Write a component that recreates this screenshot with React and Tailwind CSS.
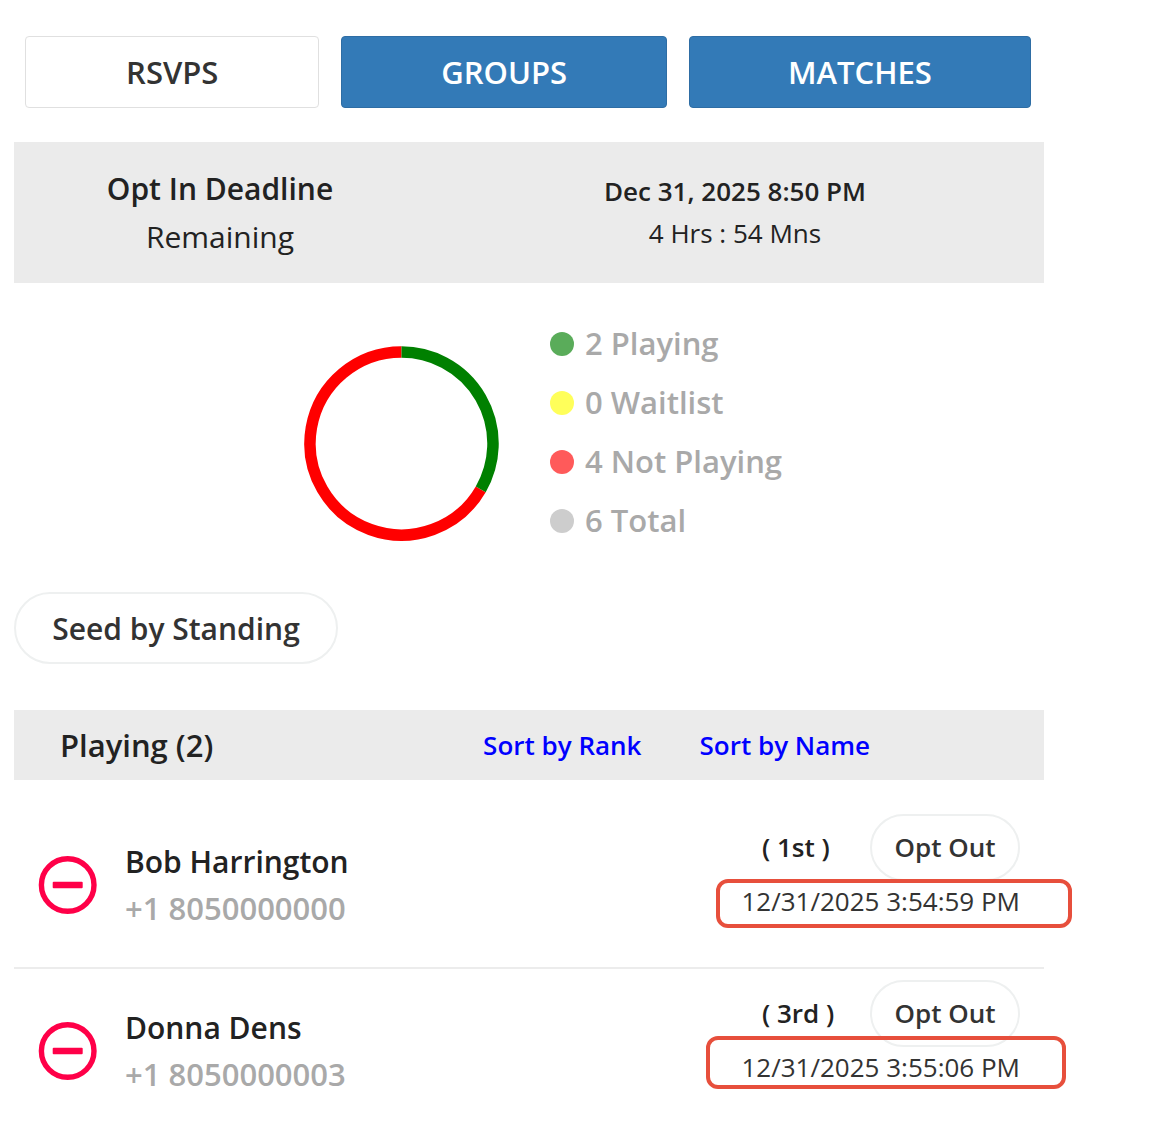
import React from "react";

const tabs = [
  {
    label: "RSVPS",
    className: "flex-[294_1_0%] bg-white border-[#e0e0e0] text-[#333333]",
  },
  {
    label: "GROUPS",
    className: "flex-[325_1_0%] bg-[#337ab7] border-[#2e6da4] text-white",
  },
  {
    label: "MATCHES",
    className: "flex-[342_1_0%] bg-[#337ab7] border-[#2e6da4] text-white",
  },
];

const legend = [
  { text: "2 Playing", dot: "bg-[#5aac5a]" },
  { text: "0 Waitlist", dot: "bg-[#ffff5a]" },
  { text: "4 Not Playing", dot: "bg-[#ff5a5a]" },
  { text: "6 Total", dot: "bg-[#cdcdcd]" },
];

const players = [
  {
    name: "Bob Harrington",
    phone: "+1 8050000000",
    rank: "( 1st )",
    time: "12/31/2025 3:54:59 PM",
    highlight: "-left-6 -right-[52px] -top-0.5 -bottom-[7px]",
  },
  {
    name: "Donna Dens",
    phone: "+1 8050000003",
    rank: "( 3rd )",
    time: "12/31/2025 3:55:06 PM",
    highlight: "-left-[34px] -right-[46px] -top-[11px] -bottom-0.5",
  },
];

const RsvpChart = () => (
  <svg
    viewBox="0 0 195 195"
    className="w-[195px] h-[195px] shrink-0"
    fill="none"
    strokeWidth="11.5"
    role="img"
    aria-label="RSVP chart"
  >
    <path d="M176.74 143.25A91.5 91.5 0 1 1 97.5 6" stroke="#ff0000" />
    <path d="M97.5 6A91.5 91.5 0 0 1 176.74 143.25" stroke="#008000" />
  </svg>
);

const PlayerRow = ({ player }) => (
  <li className="flex items-start justify-between h-[166px] last:h-[140px] pt-[11px] px-6 border-b-2 border-[#ececec] last:border-b-0">
    <div className="flex items-start">
      <button
        type="button"
        aria-label={`Remove ${player.name}`}
        className="mt-[41px] mr-[27px] cursor-pointer"
      >
        <svg viewBox="0 0 60 60" className="w-[60px] h-[60px]" fill="none">
          <circle cx="29.7" cy="30" r="26.3" stroke="#ff0048" strokeWidth="5.4" />
          <rect x="14.7" y="26.8" width="30" height="6.4" rx="1" fill="#ff0048" />
        </svg>
      </button>
      <div className="pt-6 leading-[47px] font-semibold">
        <p className="text-[30px] text-[#222222]">{player.name}</p>
        <p className="text-[31px] text-[#a9a9a9]">{player.phone}</p>
      </div>
    </div>
    <div className="w-[280px] text-[26px]">
      <div className="flex items-center justify-between pl-[22px]">
        <span className="font-semibold text-[#222222]">{player.rank}</span>
        <button
          type="button"
          className="w-[150px] h-[67px] rounded-full border-2 border-[#eef0f0] font-semibold text-[#333333] cursor-pointer"
        >
          Opt Out
        </button>
      </div>
      <div className="relative text-right whitespace-nowrap leading-10 text-[#333333]">
        {player.time}
        <div
          className={`absolute border-4 border-[#e74f3c] rounded-xl ${player.highlight}`}
        />
      </div>
    </div>
  </li>
);

const App = () => {
  return (
    <div className="bg-white pt-9 pl-3.5 pr-[107px] font-['Open_Sans','Noto_Sans',sans-serif]">
      <nav className="flex gap-[22px] pl-[11px] pr-[13px]">
        {tabs.map((tab) => (
          <button
            key={tab.label}
            type="button"
            className={`h-[72px] rounded-sm border text-[31px] font-semibold cursor-pointer ${tab.className}`}
          >
            {tab.label}
          </button>
        ))}
      </nav>

      <section className="flex items-center mt-[34px] h-[141px] bg-[#ebebeb] text-center text-[#222222]">
        <div className="w-2/5 text-[30px] leading-[48px]">
          <p className="font-semibold">Opt In Deadline</p>
          <p>Remaining</p>
        </div>
        <div className="w-3/5 pb-0.5 text-[26px] leading-[42px]">
          <p className="font-semibold">Dec 31, 2025 8:50 PM</p>
          <p>4 Hrs : 54 Mns</p>
        </div>
      </section>

      <section className="flex justify-center items-center gap-[51px] mt-[31px] pl-7">
        <div className="pt-[22px]">
          <RsvpChart />
        </div>
        <ul>
          {legend.map((item) => (
            <li
              key={item.text}
              className="flex items-center gap-[11px] h-[59px] text-[31px] font-semibold text-[#a9a9a9]"
            >
              <span className={`w-6 h-6 rounded-full ${item.dot}`} />
              {item.text}
            </li>
          ))}
        </ul>
      </section>

      <button
        type="button"
        className="mt-[42px] h-[72px] w-[324px] rounded-full border-2 border-[#eef0f0] text-[30px] font-semibold text-[#333333] cursor-pointer"
      >
        Seed by Standing
      </button>

      <section className="mt-[46px]">
        <div className="flex items-center h-[70px] pl-[46px] bg-[#ebebeb] text-[26px] font-semibold">
          <h2 className="w-[43%] text-[31px] text-[#222222]">Playing (2)</h2>
          <a href="#rank" className="w-[22%] text-[#0000ff]">
            Sort by Rank
          </a>
          <a href="#name" className="text-[#0000ff]">
            Sort by Name
          </a>
        </div>
        <ul className="pt-[23px]">
          {players.map((player) => (
            <PlayerRow key={player.name} player={player} />
          ))}
        </ul>
      </section>
    </div>
  );
};

export default App;
